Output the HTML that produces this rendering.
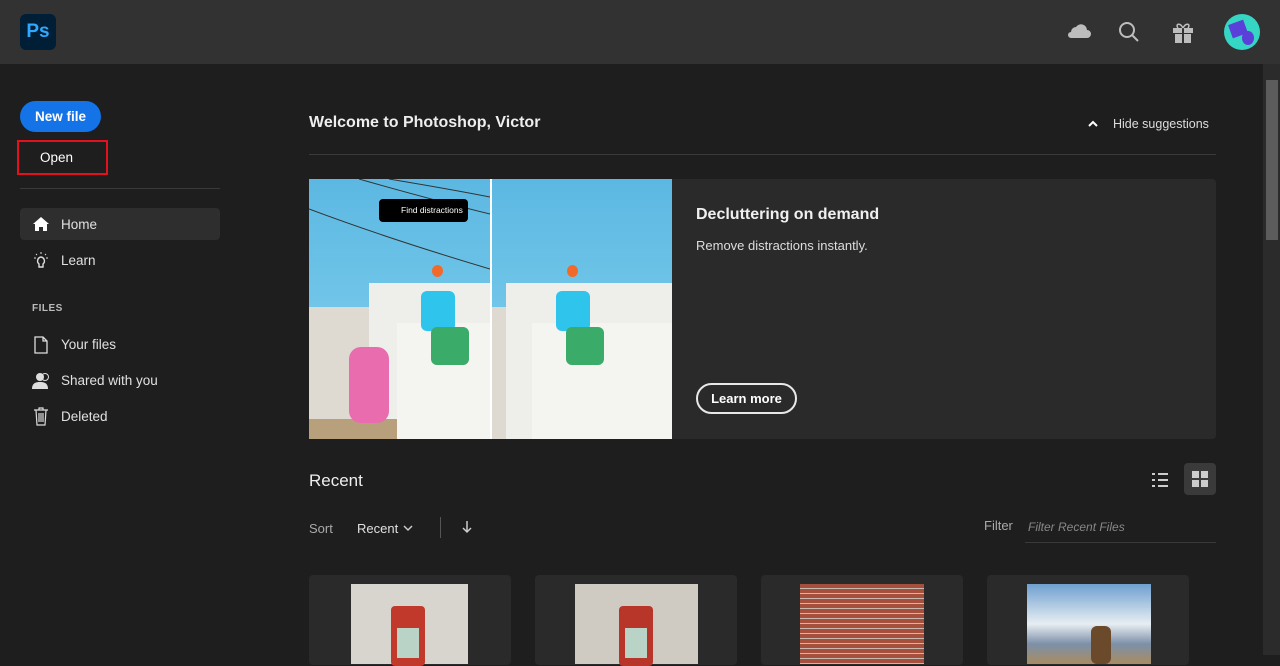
<!DOCTYPE html>
<html><head><style>
*{margin:0;padding:0;box-sizing:border-box}
body{width:1280px;height:655px;overflow:hidden;background:#1e1e1e;font-family:"Liberation Sans",sans-serif;color:#e8e8e8;position:relative}
.a{position:absolute}
.hdr{left:0;top:0;width:1280px;height:64px;background:#323232}
.ps{left:20px;top:14px;width:36px;height:36px;background:#001e36;border-radius:6px;color:#31a8ff;font-weight:bold;font-size:19px;line-height:36px;text-align:center}
.nav{font-size:13.5px;color:#e0e0e0}
.pic{overflow:hidden}
.sky{background:linear-gradient(#5cb8e2,#85d3ef)}
</style></head><body>
<div class="a hdr"></div>
<div class="a ps">Ps</div>
<svg class="a" style="left:1066px;top:20px" width="26" height="22"><path d="M5 18h16a4 4 0 0 0 0-8 6 6 0 0 0-11-3 5 5 0 0 0-5 5 3 3 0 0 0 0 6z" fill="#bdbdbd"/></svg>
<svg class="a" style="left:1117px;top:20px" width="24" height="24"><circle cx="10" cy="10" r="7" fill="none" stroke="#bdbdbd" stroke-width="2"/><path d="M15 15l6 6" stroke="#bdbdbd" stroke-width="2"/></svg>
<svg class="a" style="left:1170px;top:21px" width="26" height="24"><path d="M3 7h20v5H3zM5 13h16v9H5z" fill="#bdbdbd"/><path d="M13 7v15" stroke="#323232" stroke-width="2"/><path d="M13 7c-3-6-8-4-5 0M13 7c3-6 8-4 5 0" fill="none" stroke="#bdbdbd" stroke-width="1.5"/></svg>
<div class="a" style="left:1224px;top:14px;width:36px;height:36px;border-radius:50%;background:#35d6c4;overflow:hidden"><div class="a" style="left:6px;top:8px;width:16px;height:14px;background:#5a3fd8;transform:rotate(-20deg)"></div><div class="a" style="left:18px;top:17px;width:12px;height:14px;border-radius:50%;background:#5a3fd8"></div></div>
<div class="a" style="left:1263px;top:64px;width:17px;height:591px;background:#2b2b2b"></div>
<div class="a" style="left:1266px;top:80px;width:12px;height:160px;background:#5c5c5c"></div>

<div class="a" style="left:20px;top:101px;width:81px;height:31px;border-radius:16px;background:#1473e6;color:#fff;font-weight:bold;font-size:13.5px;line-height:31px;text-align:center">New file</div>
<div class="a" style="left:17px;top:140px;width:91px;height:35px;border:2px solid #e3101e;color:#fff;font-size:13.5px;padding:8px 0 0 21px">Open</div>
<div class="a" style="left:20px;top:188px;width:200px;height:1px;background:#3a3a3a"></div>
<div class="a" style="left:20px;top:208px;width:200px;height:32px;background:#2e2e2e;border-radius:4px"></div>
<svg class="a" style="left:32px;top:216px" width="18" height="16"><path d="M9 1L1 8h2v7h4v-4h4v4h4V8h2z" fill="#fff"/></svg>
<div class="a nav" style="left:61px;top:217px">Home</div>
<svg class="a" style="left:32px;top:251px" width="18" height="20"><path d="M9 6a4 4 0 0 0-2 7v3h4v-3a4 4 0 0 0-2-7z" fill="none" stroke="#ddd" stroke-width="1.4"/><path d="M9 1v2M2 7h2M14 7h2M4 3l1 1M14 3l-1 1" stroke="#ddd"/></svg>
<div class="a nav" style="left:61px;top:253px">Learn</div>
<div class="a" style="left:32px;top:303px;font-size:10px;color:#bbb;font-weight:bold;letter-spacing:.5px">FILES</div>
<svg class="a" style="left:34px;top:336px" width="14" height="18"><path d="M1 1h8l4 4v12H1z M9 1v4h4" fill="none" stroke="#ddd" stroke-width="1.3"/></svg>
<div class="a nav" style="left:61px;top:337px">Your files</div>
<svg class="a" style="left:32px;top:372px" width="20" height="18"><circle cx="8" cy="5" r="4" fill="#ddd"/><path d="M0 17c0-6 4-7 8-7s8 1 8 7z" fill="#ddd"/><circle cx="13" cy="5" r="3.5" fill="none" stroke="#ddd"/></svg>
<div class="a nav" style="left:61px;top:373px">Shared with you</div>
<svg class="a" style="left:33px;top:407px" width="16" height="19"><path d="M1 3h14M6 3V1h4v2M3 3l1 15h8l1-15M6 6v9M8 6v9M10 6v9" fill="none" stroke="#ddd" stroke-width="1.2"/></svg>
<div class="a nav" style="left:61px;top:409px">Deleted</div>

<div class="a" style="left:309px;top:114px;font-size:16px;font-weight:bold;color:#eee">Welcome to Photoshop, Victor</div>
<svg class="a" style="left:1087px;top:119px" width="12" height="10"><path d="M2 7l4-4 4 4" fill="none" stroke="#fff" stroke-width="2"/></svg>
<div class="a" style="left:1113px;top:117px;font-size:12.5px;color:#ddd">Hide suggestions</div>
<div class="a" style="left:309px;top:154px;width:907px;height:1px;background:#3a3a3a"></div>

<div class="a" style="left:309px;top:179px;width:907px;height:260px;background:#2a2a2a;border-radius:4px"></div>
<div class="a pic sky" style="left:309px;top:179px;width:181px;height:260px">
 <svg class="a" style="left:0;top:0" width="181" height="260"><path d="M0 30Q80 60 181 90M50 0Q120 20 181 35M80 0Q140 10 181 18" stroke="#333" fill="none"/></svg>
 <div class="a" style="left:0;top:128px;width:181px;height:132px;background:#dedad2"></div>
 <div class="a" style="left:60px;top:104px;width:121px;height:156px;background:#eeeeea"></div>
 <div class="a" style="left:88px;top:144px;width:93px;height:116px;background:#f4f4f0"></div>
 <div class="a" style="left:0;top:240px;width:88px;height:20px;background:#b8a07c"></div>
 <div class="a" style="left:40px;top:168px;width:40px;height:76px;background:#e86cae;border-radius:12px"></div>
 <div class="a" style="left:112px;top:112px;width:34px;height:40px;background:#2fc4ec;border-radius:6px"></div>
 <div class="a" style="left:122px;top:148px;width:38px;height:38px;background:#3bab6a;border-radius:6px"></div>
 <div class="a" style="left:123px;top:86px;width:11px;height:12px;background:#f26a2a;border-radius:50%"></div>
</div>
<div class="a" style="left:379px;top:199px;width:89px;height:23px;background:#000;border-radius:4px;color:#fff;font-size:8.5px;line-height:23px;padding-left:22px">Find distractions</div>
<div class="a" style="left:490px;top:179px;width:2px;height:260px;background:#fff"></div>
<div class="a pic sky" style="left:492px;top:179px;width:180px;height:260px">
 <div class="a" style="left:0;top:128px;width:180px;height:132px;background:#dedad2"></div>
 <div class="a" style="left:14px;top:104px;width:166px;height:156px;background:#eeeeea"></div>
 <div class="a" style="left:40px;top:144px;width:140px;height:116px;background:#f4f4f0"></div>
 <div class="a" style="left:64px;top:112px;width:34px;height:40px;background:#2fc4ec;border-radius:6px"></div>
 <div class="a" style="left:74px;top:148px;width:38px;height:38px;background:#3bab6a;border-radius:6px"></div>
 <div class="a" style="left:75px;top:86px;width:11px;height:12px;background:#f26a2a;border-radius:50%"></div>
</div>
<div class="a" style="left:696px;top:206px;font-size:16px;font-weight:bold;color:#f0f0f0">Decluttering on demand</div>
<div class="a" style="left:696px;top:238px;font-size:13px;color:#ddd">Remove distractions instantly.</div>
<div class="a" style="left:696px;top:383px;width:101px;height:31px;border:2px solid #e8e8e8;border-radius:16px;font-size:13px;font-weight:bold;text-align:center;line-height:27px;color:#fff">Learn more</div>

<div class="a" style="left:309px;top:471px;font-size:17px;color:#eee">Recent</div>
<svg class="a" style="left:1151px;top:472px" width="18" height="16"><path d="M1 2h3M7 2h10M1 8h3M7 8h10M1 14h3M7 14h10" stroke="#ccc" stroke-width="2"/></svg>
<div class="a" style="left:1184px;top:463px;width:32px;height:32px;background:#3a3a3a;border-radius:4px"></div>
<svg class="a" style="left:1191px;top:470px" width="18" height="18"><path d="M1 1h7v7H1zM10 1h7v7h-7zM1 10h7v7H1zM10 10h7v7h-7z" fill="#ccc"/></svg>
<div class="a" style="left:309px;top:521px;font-size:13px;color:#aaa">Sort</div>
<div class="a" style="left:357px;top:521px;font-size:13px;color:#e0e0e0">Recent</div>
<svg class="a" style="left:402px;top:523px" width="12" height="10"><path d="M2 3l4 4 4-4" fill="none" stroke="#ccc" stroke-width="1.5"/></svg>
<div class="a" style="left:440px;top:517px;width:1px;height:21px;background:#555"></div>
<svg class="a" style="left:462px;top:520px" width="10" height="14"><path d="M5 1v11M1 8l4 4 4-4" fill="none" stroke="#ccc" stroke-width="1.5"/></svg>
<div class="a" style="left:984px;top:518px;font-size:13px;color:#aaa">Filter</div>
<div class="a" style="left:1028px;top:520px;font-size:12px;color:#888;font-style:italic">Filter Recent Files</div>
<div class="a" style="left:1025px;top:542px;width:191px;height:1px;background:#3a3a3a"></div>

<div class="a" style="left:309px;top:575px;width:202px;height:90px;background:#2a2a2a;border-radius:4px"></div>
<div class="a" style="left:351px;top:584px;width:117px;height:80px;background:#d8d5cf"><div class="a" style="left:40px;top:22px;width:34px;height:60px;background:#c0392b;border-radius:4px"></div><div class="a" style="left:46px;top:44px;width:22px;height:30px;background:#b9d4c7"></div></div>
<div class="a" style="left:535px;top:575px;width:202px;height:90px;background:#2a2a2a;border-radius:4px"></div>
<div class="a" style="left:575px;top:584px;width:123px;height:80px;background:#cfcbc3"><div class="a" style="left:44px;top:22px;width:34px;height:60px;background:#b8352a;border-radius:4px"></div><div class="a" style="left:50px;top:44px;width:22px;height:30px;background:#b9d4c7"></div></div>
<div class="a" style="left:761px;top:575px;width:202px;height:90px;background:#2a2a2a;border-radius:4px"></div>
<div class="a" style="left:800px;top:584px;width:124px;height:80px;background:repeating-linear-gradient(#a4503c 0 4px,#c8b8b0 4px 5px)"></div>
<div class="a" style="left:987px;top:575px;width:202px;height:90px;background:#2a2a2a;border-radius:4px"></div>
<div class="a" style="left:1027px;top:584px;width:124px;height:80px;background:linear-gradient(#6fa0d0,#e8eef2 50%,#7d90a8 75%,#a88c60)"><div class="a" style="left:64px;top:42px;width:20px;height:38px;background:#6b4a2c;border-radius:6px"></div></div>
</body></html>
